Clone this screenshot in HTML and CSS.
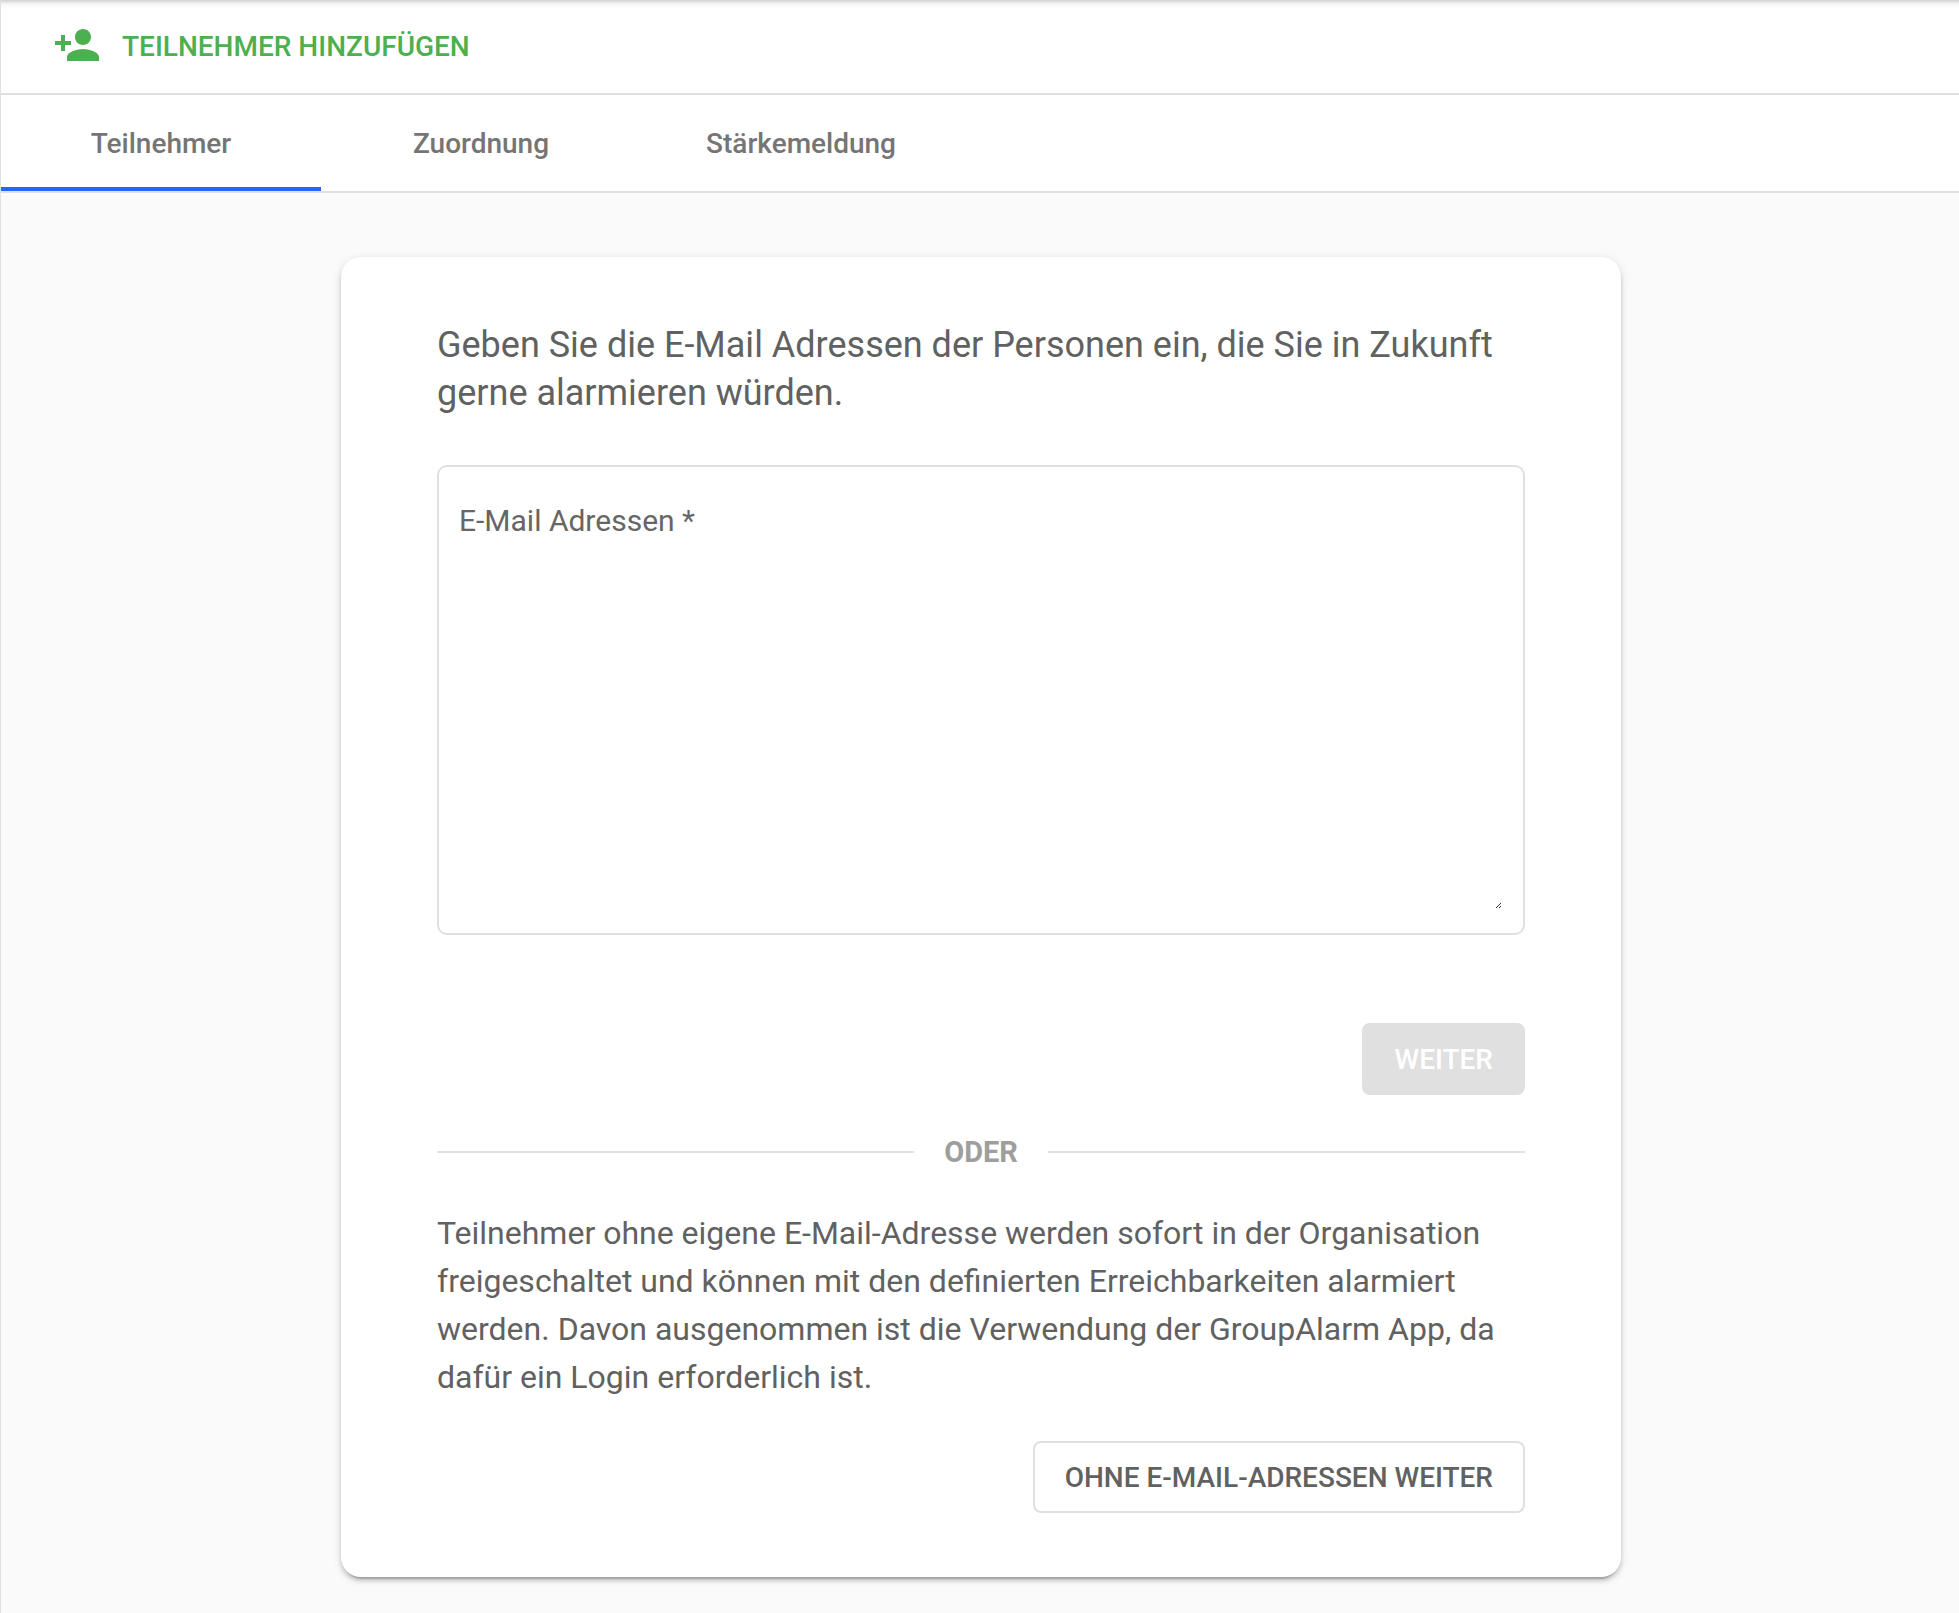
FILE: index.html
```
<!DOCTYPE html>
<html lang="de">
<head>
    <meta charset="UTF-8">
    <meta name="viewport" content="width=device-width, initial-scale=1.0">
    <title>Teilnehmer hinzufügen</title>
    <link rel="stylesheet" href="styles.css">
</head>
<body>

    <!-- Header -->
    <header class="header">
        <svg class="header-icon" viewBox="0 0 24 24" aria-hidden="true">
            <path d="M15 12c2.21 0 4-1.79 4-4s-1.79-4-4-4-4 1.79-4 4 1.79 4 4 4zm-9-2V7H4v3H1v2h3v3h2v-3h3v-2H6zm9 4c-2.67 0-8 1.34-8 4v2h16v-2c0-2.66-5.33-4-8-4z"/>
        </svg>
        <h1>TEILNEHMER HINZUFÜGEN</h1>
    </header>

    <!-- Tabs -->
    <nav class="tabs">
        <a class="tab active" href="#teilnehmer">Teilnehmer</a>
        <a class="tab" href="#zuordnung">Zuordnung</a>
        <a class="tab" href="#staerkemeldung">Stärkemeldung</a>
    </nav>

    <!-- Main Content -->
    <main class="content">
        <form class="card">
            <p class="intro">Geben Sie die E-Mail Adressen der Personen ein, die Sie in Zukunft gerne alarmieren würden.</p>

            <div class="field">
                <label for="emails">E-Mail Adressen *</label>
                <textarea id="emails" required></textarea>
                <svg class="grip" viewBox="0 0 6 6" aria-hidden="true">
                    <path d="M0 5L5 0M3 5L5 3"/>
                </svg>
            </div>

            <div class="actions">
                <button type="submit" class="button button-primary" disabled>WEITER</button>
            </div>

            <div class="divider"><span>ODER</span></div>

            <p class="hint">Teilnehmer ohne eigene E-Mail-Adresse werden sofort in der Organisation freigeschaltet und können mit den definierten Erreichbarkeiten alarmiert werden. Davon ausgenommen ist die Verwendung der GroupAlarm App, da dafür ein Login erforderlich ist.</p>

            <div class="actions">
                <button type="button" class="button button-outlined">OHNE E-MAIL-ADRESSEN WEITER</button>
            </div>
        </form>
    </main>

</body>
</html>
```
FILE: styles.css
```
* {
    box-sizing: border-box;
}
body {
    font-family: Roboto, sans-serif;
    margin: 0;
    min-height: 100vh;
    background: #fafafa;
    color: #616161;
    border-left: 1px solid #e0e0e0;
}
/* Header */
.header {
    display: flex;
    align-items: center;
    gap: 21px;
    padding: 21px 52px 20px;
    background: linear-gradient(rgba(0, 0, 0, 0.18), rgba(0, 0, 0, 0.04) 4px, transparent 8px) #fff;
    border-bottom: 2px solid #e0e0e0;
}
.header-icon {
    width: 48px;
    height: 48px;
    margin-bottom: 4px;
    fill: #4caf50;
}
.header h1 {
    margin: 0;
    color: #4caf50;
    font-size: 28px;
    font-weight: 500;
    line-height: 52px;
}
/* Tabs */
.tabs {
    display: flex;
    background: #fff;
    border-bottom: 2px solid #e0e0e0;
}
.tab {
    width: 320px;
    padding: 25px 16px 19px;
    border-bottom: 4px solid transparent;
    color: #757575;
    font-size: 28px;
    font-weight: 500;
    line-height: 48px;
    text-align: center;
    text-decoration: none;
}
.tab.active {
    border-bottom-color: #2962ff;
}
/* Card */
.content {
    padding: 64px 32px 36px 34px;
}
.card {
    max-width: 1280px;
    margin: 0 auto;
    padding: 64px 96px;
    background: #fff;
    border-radius: 20px;
    box-shadow: 0 6px 2px -4px rgba(0, 0, 0, 0.2), 0 4px 4px rgba(0, 0, 0, 0.14), 0 2px 10px rgba(0, 0, 0, 0.12);
}
.intro, .hint {
    margin: 0;
    line-height: 48px;
}
.intro {
    font-size: 36px;
}
.hint {
    margin-bottom: 40px;
    font-size: 32px;
}
/* E-mail field */
.field {
    position: relative;
    display: flex;
    flex-direction: column;
    height: 470px;
    margin: 48px 0 88px;
    padding: 32px 20px 24px;
    border: 2px solid #e0e0e0;
    border-radius: 10px;
}
.field label {
    font-size: 30px;
    line-height: 44px;
    color: #666;
}
.field textarea {
    flex: 1;
    padding: 0;
    border: none;
    outline: none;
    resize: none;
    background: transparent;
    color: #212121;
    font: 30px/44px Roboto, sans-serif;
}
.grip {
    position: absolute;
    right: 21px;
    bottom: 24px;
    width: 6px;
    height: 6px;
    fill: none;
    stroke: #333;
}
/* Buttons */
.actions {
    display: flex;
    justify-content: flex-end;
}
.button {
    height: 72px;
    padding: 0 30px;
    border: 2px solid #e0e0e0;
    border-radius: 8px;
    font-family: inherit;
    font-size: 28px;
    font-weight: 500;
    cursor: pointer;
}
.button-primary:disabled {
    background: #e0e0e0;
    color: #fff;
    cursor: default;
}
.button-outlined {
    background: #fff;
    color: #616161;
}
/* Divider */
.divider {
    display: flex;
    align-items: center;
    gap: 30px;
    margin: 32px 0;
    color: #9e9e9e;
    font-size: 29px;
    font-weight: 700;
    line-height: 50px;
}
.divider::before, .divider::after {
    content: "";
    flex: 1;
    height: 2px;
    background: #e0e0e0;
}
```
